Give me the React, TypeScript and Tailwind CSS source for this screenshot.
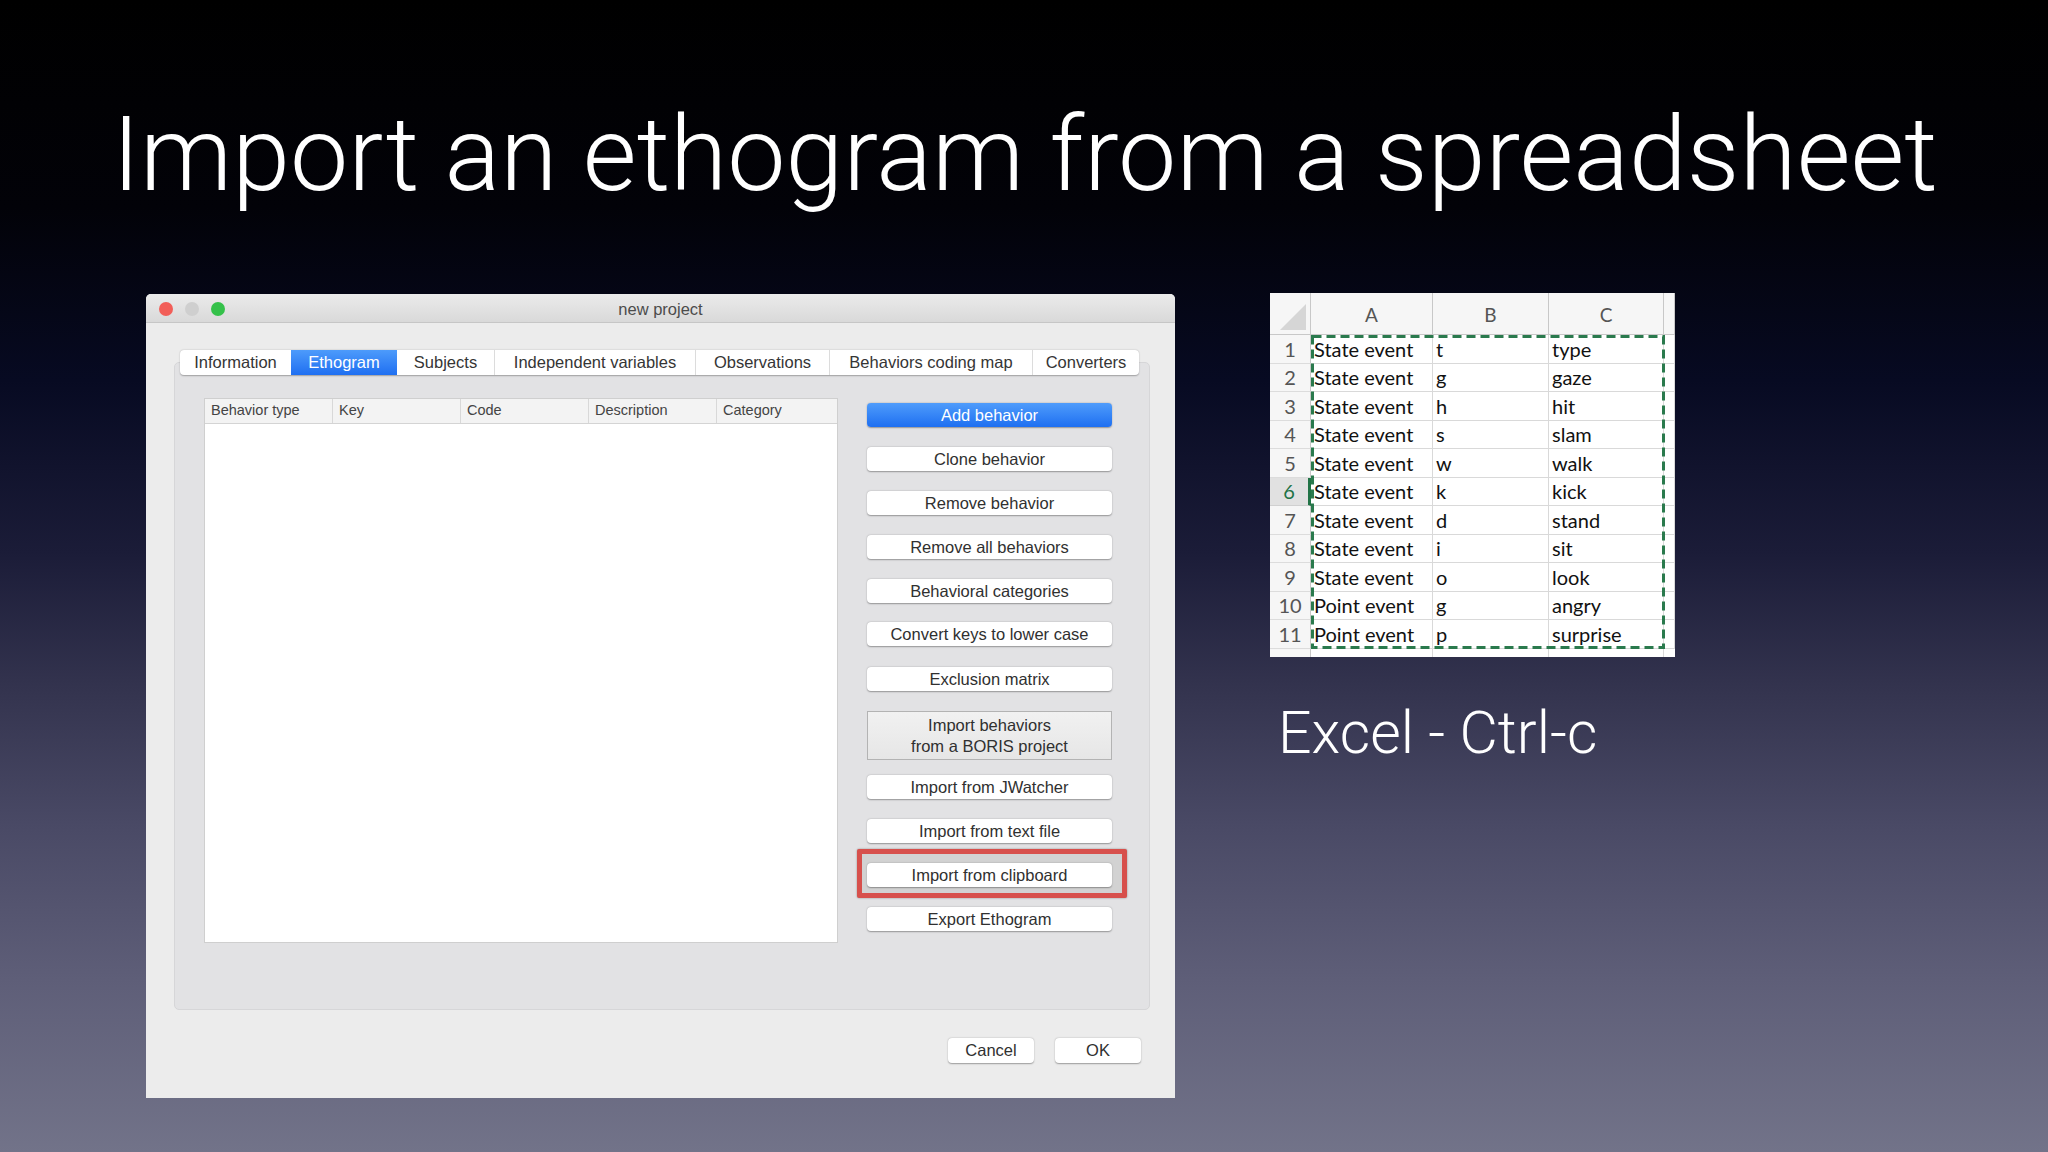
import type { ReactNode } from 'react'

const TABS = [
  { label: 'Information', w: 'w-[111px]' },
  { label: 'Ethogram', w: 'w-[106px]', active: true },
  { label: 'Subjects', w: 'w-[97px]' },
  { label: 'Independent variables', w: 'w-[201px]' },
  { label: 'Observations', w: 'w-[134px]' },
  { label: 'Behaviors coding map', w: 'w-[203px]' },
  { label: 'Converters', w: 'w-[107px]' },
]

const COLUMNS = ['Behavior type', 'Key', 'Code', 'Description', 'Category']

const ROWS: [string, string, string][] = [
  ['State event', 't', 'type'],
  ['State event', 'g', 'gaze'],
  ['State event', 'h', 'hit'],
  ['State event', 's', 'slam'],
  ['State event', 'w', 'walk'],
  ['State event', 'k', 'kick'],
  ['State event', 'd', 'stand'],
  ['State event', 'i', 'sit'],
  ['State event', 'o', 'look'],
  ['Point event', 'g', 'angry'],
  ['Point event', 'p', 'surprise'],
]

function MacButton({ children, className = '' }: { children: ReactNode; className?: string }) {
  return (
    <div
      className={`relative z-10 h-[24px] flex items-center justify-center rounded-[4px] bg-white text-[16.5px] text-[#303030] shadow-[0_0.5px_1.5px_rgba(0,0,0,0.35)] ${className}`}
    >
      {children}
    </div>
  )
}

function Dialog() {
  return (
    <div className="w-[1029px] h-[804px] flex flex-col bg-[#ececec] rounded-t-[5px] overflow-hidden font-['Liberation_Sans',Arial,sans-serif]">
      {/* title bar */}
      <div className="relative h-[29px] shrink-0 flex items-center justify-center bg-[linear-gradient(to_bottom,#ebebeb,#d9d9d9)] border-b border-[#c6c6c6]">
        <div className="absolute left-[13px] top-[8px] flex gap-[12px]">
          <span className="w-[14px] h-[14px] rounded-full bg-[#f25e58]" />
          <span className="w-[14px] h-[14px] rounded-full bg-[#cfcfcf]" />
          <span className="w-[14px] h-[14px] rounded-full bg-[#35c14a]" />
        </div>
        <span className="mt-[2px] text-[16.5px] text-[#4c4c4c]">new project</span>
      </div>

      <div className="flex flex-col pl-[28px] pr-[25px]">
        {/* tabs */}
        <div className="relative z-10 mt-[27px] flex pl-[6px]">
          <div className="flex h-[25px] rounded-[4px] bg-white shadow-[0_0.5px_1.5px_rgba(0,0,0,0.3)]">
            {TABS.map((t, i) => (
              <div
                key={t.label}
                className={`${t.w} flex items-center justify-center text-[16.5px] ${
                  t.active
                    ? 'bg-[linear-gradient(to_bottom,#4d9bfb,#1f6ff1)] text-white'
                    : 'text-[#353535]'
                } ${i > 0 && !t.active && !TABS[i - 1].active ? 'border-l border-[#dcdcdc]' : ''} ${
                  i === 0 ? 'rounded-l-[4px]' : ''
                } ${i === TABS.length - 1 ? 'rounded-r-[4px]' : ''}`}
              >
                {t.label}
              </div>
            ))}
          </div>
        </div>

        {/* pane */}
        <div className="-mt-[13px] h-[648px] flex items-start rounded-[5px] bg-[#e2e2e4] border border-[#d6d6d8] pt-[35px] pl-[29px]">
          {/* table */}
          <div className="w-[634px] h-[545px] bg-white border border-[#cfcfcf] flex flex-col">
            <div className="h-[25px] flex bg-[#f3f3f3] border-b border-[#d4d4d4]">
              {COLUMNS.map((c, i) => (
                <div
                  key={c}
                  className={`${i === 4 ? 'flex-1' : 'w-[128px] border-r border-[#d8d8d8]'} flex items-center pl-[6px] text-[14.5px] text-[#444]`}
                >
                  {c}
                </div>
              ))}
            </div>
          </div>

          {/* buttons */}
          <div className="ml-[29px] mt-[5px] w-[245px] flex flex-col">
            <div className="h-[24px] flex items-center justify-center rounded-[4px] bg-[linear-gradient(to_bottom,#4f9cfb,#1e6ff1)] text-[16.5px] text-white shadow-[0_0.5px_1.5px_rgba(0,0,0,0.35)]">
              Add behavior
            </div>
            <MacButton className="mt-[20px]">Clone behavior</MacButton>
            <MacButton className="mt-[20px]">Remove behavior</MacButton>
            <MacButton className="mt-[20px]">Remove all behaviors</MacButton>
            <MacButton className="mt-[20px]">Behavioral categories</MacButton>
            <MacButton className="mt-[19px]">Convert keys to lower case</MacButton>
            <MacButton className="mt-[21px]">Exclusion matrix</MacButton>
            <div className="mt-[20px] h-[49px] flex flex-col items-center justify-center border border-[#b3b3b3] bg-[linear-gradient(to_bottom,#f1f1f1,#e6e6e6)] text-[16.5px] leading-[21px] text-[#303030]">
              <span>Import behaviors</span>
              <span>from a BORIS project</span>
            </div>
            <MacButton className="mt-[15px]">Import from JWatcher</MacButton>
            <MacButton className="mt-[20px]">Import from text file</MacButton>
            <div className="relative mt-[20px]">
              <div className="absolute -left-[10px] -right-[15px] -top-[14px] -bottom-[11px] border-[5px] border-[#d7504c] bg-[#d2d2d2] rounded-[2px] shadow-[0_0_2px_rgba(0,0,0,0.4)]" />
              <MacButton className="bg-[#f6f6f6]">Import from clipboard</MacButton>
            </div>
            <MacButton className="mt-[20px]">Export Ethogram</MacButton>
          </div>
        </div>

        {/* dialog buttons */}
        <div className="mt-[28px] flex justify-end gap-[21px] pr-[9px]">
          <MacButton className="w-[86px] h-[25px]">Cancel</MacButton>
          <MacButton className="w-[86px] h-[25px]">OK</MacButton>
        </div>
      </div>
    </div>
  )
}

function Sheet() {
  const cell = 'h-[28.5px] border-r border-b border-[#d9d9d9] flex items-end pb-[4px] pl-[3px] text-[20px] leading-none text-[#111] overflow-hidden whitespace-nowrap'
  return (
    <div className="relative w-[405px] h-[364px] bg-white overflow-hidden font-['Lato','Liberation_Sans',sans-serif]">
      <div className="grid grid-cols-[41px_122px_116px_115px_11px]">
        {/* header row */}
        <div className="relative h-[42px] bg-[#f6f6f6] border-r border-b border-[#c8c8c8]">
          <svg className="absolute right-[4px] bottom-[4px]" width="26" height="26" viewBox="0 0 26 26">
            <polygon points="26,0 26,26 0,26" fill="#d6d6d6" />
          </svg>
        </div>
        {['A', 'B', 'C', ''].map((l, i) => (
          <div
            key={i}
            className="h-[42px] bg-[#f6f6f6] border-r border-b border-[#c8c8c8] flex items-center justify-center pt-[4px] text-[19px] text-[#555]"
          >
            {l}
          </div>
        ))}
        {ROWS.map((r, i) => {
          const active = i === 5
          return [
            <div
              key={`h${i}`}
              className={`h-[28.5px] border-b flex items-center justify-center text-[20px] leading-none ${
                active
                  ? 'bg-[#e1e1e1] text-[#217346] border-r-[3px] border-r-[#217346] border-b-[#d0d0d0]'
                  : 'bg-[#f6f6f6] text-[#555] border-r border-r-[#c8c8c8] border-b-[#dcdcdc]'
              }`}
            >
              {i + 1}
            </div>,
            <div key={`a${i}`} className={cell}>{r[0]}</div>,
            <div key={`b${i}`} className={cell}>{r[1]}</div>,
            <div key={`c${i}`} className={cell}>{r[2]}</div>,
            <div key={`d${i}`} className={cell} />,
          ]
        })}
        <div className="h-[12px] bg-[#f6f6f6] border-r border-[#c8c8c8]" />
        <div className="h-[12px] border-r border-[#d9d9d9]" />
        <div className="h-[12px] border-r border-[#d9d9d9]" />
        <div className="h-[12px] border-r border-[#d9d9d9]" />
        <div className="h-[12px]" />
      </div>
      {/* copy marquee */}
      <svg className="absolute left-[41px] top-[42px]" width="354" height="315" viewBox="0 0 354 315">
        <rect x="1.5" y="1.5" width="351" height="311" fill="none" stroke="#2a7a4d" strokeWidth="3" strokeDasharray="9 5" />
      </svg>
    </div>
  )
}

export default function App() {
  return (
    <div className="w-[2048px] h-[1152px] overflow-hidden bg-[linear-gradient(to_bottom,#000000_0%,#020208_18%,#070a22_33%,#1b1c38_48%,#34344f_60%,#4a4a66_72%,#5e5e78_85%,#727389_100%)]">
      <h1 className="h-[294px] pt-[103px] pl-[2px] text-center text-white text-[104px] leading-none font-light font-['Roboto','Liberation_Sans',sans-serif]">
        Import an ethogram from a spreadsheet
      </h1>
      <div className="flex items-start pl-[146px]">
        <Dialog />
        <div className="ml-[95px] -mt-px flex flex-col">
          <Sheet />
          <p className="mt-[46px] ml-[8px] text-white text-[59px] leading-none font-light font-['Roboto','Liberation_Sans',sans-serif]">
            Excel - Ctrl-c
          </p>
        </div>
      </div>
    </div>
  )
}
